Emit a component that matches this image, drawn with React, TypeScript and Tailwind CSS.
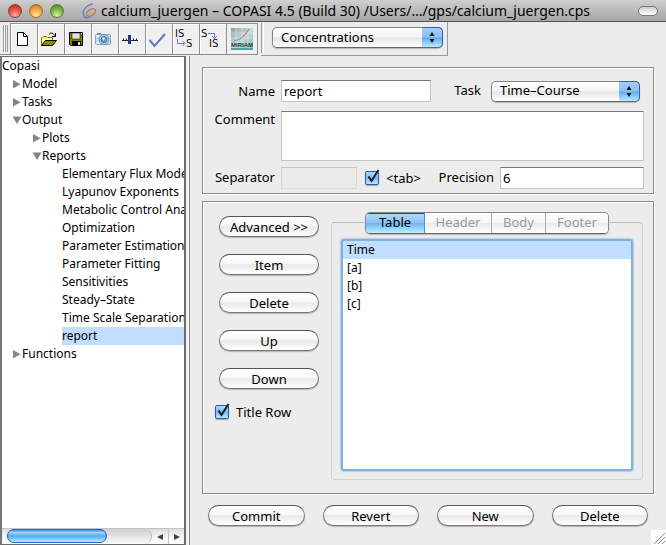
import React, { useId, useState } from "react";

type TreeNode = { label: string; depth: number; state?: "open" | "closed" };

const tree: TreeNode[] = [
  { label: "Copasi", depth: 0 },
  { label: "Model", depth: 1, state: "closed" },
  { label: "Tasks", depth: 1, state: "closed" },
  { label: "Output", depth: 1, state: "open" },
  { label: "Plots", depth: 2, state: "closed" },
  { label: "Reports", depth: 2, state: "open" },
  { label: "Elementary Flux Modes", depth: 3 },
  { label: "Lyapunov Exponents", depth: 3 },
  { label: "Metabolic Control Analysis", depth: 3 },
  { label: "Optimization", depth: 3 },
  { label: "Parameter Estimation", depth: 3 },
  { label: "Parameter Fitting", depth: 3 },
  { label: "Sensitivities", depth: 3 },
  { label: "Steady–State", depth: 3 },
  { label: "Time Scale Separation", depth: 3 },
  { label: "report", depth: 3 },
  { label: "Functions", depth: 1, state: "closed" },
];

const indents = ["pl-0", "pl-2.5", "pl-7.5", "pl-15"];

function Toggle({ state }: { state: "open" | "closed" }) {
  return (
    <svg width="10" height="10" viewBox="0 0 10 10" className="shrink-0" fill="#858585" aria-hidden="true">
      {state === "open" ? <path d="M0.500 1.500h9L5 9z" /> : <path d="M1 1v8.500L8.500 5.200z" />}
    </svg>
  );
}

function Tree() {
  return (
    <aside className="flex w-[186px] shrink-0 flex-col border-2 border-t border-b border-[#6b6b6b] border-l-[#777] bg-white">
      <ul className="min-h-0 flex-1 overflow-hidden">
        {tree.map((n) => (
          <li key={n.label} className={`flex h-[18px] items-center whitespace-nowrap ${indents[n.depth]}`}>
            {n.state && <Toggle state={n.state} />}
            <span className={`h-[18px] leading-[18px] ${n.state ? "" : "flex-1"} ${n.label === "report" ? "bg-[#c1deff]" : ""}`}>
              {n.label}
            </span>
          </li>
        ))}
      </ul>
      <div className="flex h-4 shrink-0 border-t border-[#c4c4c4] bg-linear-to-b from-[#dcdcdc] via-[#f4f4f4] to-white">
        <div className="ml-1 flex-1 rounded-full border-r border-[#b5b5b5] bg-linear-to-b from-[#cfcfcf] to-[#fbfbfb]">
          <div className="ml-px h-3.5 w-[100px] rounded-full border border-[#1f63c4] bg-[linear-gradient(#3b8be4,#a5d0fa_20%,#5aaaf3_50%,#79c4fb_70%,#b9f0ff)]" />
        </div>
        <button aria-label="Scroll left" className="flex w-4 items-center justify-center">
          <svg width="6" height="6" viewBox="0 0 6 6" fill="#444"><path d="M6 0v6L0 3z" /></svg>
        </button>
        <button aria-label="Scroll right" className="flex w-4 items-center justify-center border-l border-[#c4c4c4]">
          <svg width="6" height="6" viewBox="0 0 6 6" fill="#444"><path d="M0 0v6l6-3z" /></svg>
        </button>
      </div>
    </aside>
  );
}

function Popup({ label, value, id, className }: { label?: string; value: string; id: string; className: string }) {
  return (
    <div className={`relative h-[21px] ${className}`}>
      <select
        id={id}
        aria-label={label}
        className="block h-[21px] w-full appearance-none rounded-[5px] border border-[#858585] border-b-[#666] bg-[linear-gradient(#fff,#f3f3f3_48%,#e6e6e6_52%,#fff)] pb-0.5 pl-2 text-[13px] leading-4 shadow-[0_1px_1px_#bbb]"
      >
        <option>{value}</option>
      </select>
      <span className="pointer-events-none absolute inset-y-0 right-0 flex w-[21px] items-center justify-center rounded-r-[5px] border border-l-0 border-[#2a61b5] border-b-[#666] bg-[linear-gradient(#a9cdf3,#8bc0f3_48%,#5fa9ee_52%,#b5ecff)]">
        <svg width="6" height="13" viewBox="0 0 6 13" fill="#111"><path d="M3 1l2.500 4h-5zM3 12l2.500-4h-5z" /></svg>
      </span>
    </div>
  );
}

function Check({ label }: { label: string }) {
  const id = useId();
  const [on, setOn] = useState(true);
  return (
    <div className="flex items-center gap-[7px]">
      <span className="relative flex">
        <input
          id={id}
          type="checkbox"
          checked={on}
          onChange={() => setOn(!on)}
          className="size-3.5 appearance-none rounded-[2px] border border-[#2c5c9e] bg-[linear-gradient(#b8d6f6,#79b8f2_50%,#b4ebff)] shadow-[0_1px_1px_#aaa]"
        />
        {on && (
          <svg width="15" height="16" viewBox="0 0 15 16" className="pointer-events-none absolute bottom-0 left-0" fill="none" stroke="#1c1c2c">
            <path d="M3.500 7.500L6.500 12L13.500 1" strokeWidth="2" />
          </svg>
        )}
      </span>
      <label htmlFor={id} className="leading-[18px]">{label}</label>
    </div>
  );
}

function Pill({ children }: { children: React.ReactNode }) {
  return (
    <button className="h-[21px] w-full rounded-full border border-[#777] border-t-[#555] bg-[linear-gradient(#fff,#f7f7f7_45%,#e9e9e9_52%,#fff)] leading-[18px] shadow-[0_1px_1px_#b5b5b5]">
      {children}
    </button>
  );
}

const tools: { name: string; icon: React.ReactNode }[] = [
  {
    name: "New",
    icon: (
      <g fill="#fff" stroke="#000" strokeWidth="1">
        <path d="M5.500 3.500h6l4 4v9h-10z" />
        <path d="M11.500 3.500v4h4" fill="none" />
      </g>
    ),
  },
  {
    name: "Open",
    icon: (
      <g>
        <path d="M2.500 16.500v-8h1l1-1h3l1 1h5v3" fill="#ffff80" stroke="#77770a" />
        <path d="M2.500 16.500l4-5h11l-4 5z" fill="#8a8a00" stroke="#000" />
        <path d="M10 5.500c2-2 4-2 5.500 1M16.500 4v3.500h-3.500" fill="none" stroke="#000" />
      </g>
    ),
  },
  {
    name: "Save",
    icon: (
      <g>
        <path d="M3.500 3.500h13v13h-12l-1-1z" fill="#808000" stroke="#000" />
        <path d="M6 4h8v6H6z" fill="#e3e3e3" stroke="#000" strokeWidth="0.500" />
        <path d="M6 12h9v5H6z" fill="#000" />
        <path d="M12 13h2v3h-2z" fill="#ddd" />
        <path d="M15 4.500h1" stroke="#fff" />
      </g>
    ),
  },
  {
    name: "Capture",
    icon: (
      <g>
        <path d="M4 4.500h4" stroke="#6b87a8" />
        <rect x="2.500" y="5.500" width="15" height="10" rx="1" fill="#cbdbe9" stroke="#8ba5bd" />
        <path d="M3 7h4M3 14h4" stroke="#fff" />
        <circle cx="11" cy="10.500" r="5" fill="#b9d8ec" stroke="#6f8fae" />
        <circle cx="11" cy="10.500" r="3" fill="#5ba4d4" stroke="#3a6f9f" />
        <circle cx="10.500" cy="9.500" r="1.200" fill="#d4f4ff" />
      </g>
    ),
  },
  {
    name: "Slider",
    icon: (
      <g stroke="#222" fill="none">
        <path d="M2 11.500h16M3.500 9.500v2M6.500 9.500v2M13.500 9.500v2M16.500 9.500v2" />
        <path d="M9.500 6v9" stroke="#26358c" strokeWidth="3" />
      </g>
    ),
  },
  { name: "Check", icon: <path d="M2.500 11l5 6L18 5" fill="none" stroke="#6478c4" strokeWidth="2" /> },
  {
    name: "Initial state to state",
    icon: (
      <g fontFamily="'DejaVu Sans'" fontSize="10" fill="#111">
        <text x="1" y="8">IS</text>
        <text x="12" y="18">S</text>
        <path d="M3.500 10v4.500h7M8.500 12l2.500 2.500L8.500 17" fill="none" stroke="#6478c4" />
      </g>
    ),
  },
  {
    name: "State to initial state",
    icon: (
      <g fontFamily="'DejaVu Sans'" fontSize="10" fill="#111">
        <text x="0" y="8">S</text>
        <text x="8" y="18">IS</text>
        <path d="M7 4.500h6.500v5M11 7l2.500 2.500L16 7" fill="none" stroke="#6478c4" />
      </g>
    ),
  },
];

function Toolbar() {
  return (
    <div className="flex h-[34px] shrink-0 bg-[#ececec]">
      <div className="mt-px flex h-8 border-b border-[#8f8f8f] pl-[3px]">
        <span className="my-0.5 mr-px w-[3px] border-x border-[#999] bg-white" />
        <span className="my-0.5 mr-0.5 w-px bg-[#999]" />
        {tools.map((t) => (
          <button key={t.name} aria-label={t.name} className="flex w-[27px] items-center justify-center border-t border-l border-[#8f8f8f] bg-[#f0f0f0] pr-1 shadow-[inset_1px_1px_0_#fff]">
            <svg width="21" height="21" viewBox="0 0 21 21">{t.icon}</svg>
          </button>
        ))}
        <button aria-label="MIRIAM" className="flex w-[32px] items-center justify-center border border-b-0 border-[#8f8f8f] bg-[#f0f0f0]">
          <svg width="22" height="22" viewBox="0 0 22 22">
            <defs>
              <linearGradient id="miriam" x1="0" y1="0" x2="1" y2="1">
                <stop offset="0" stopColor="#8f9fa4" />
                <stop offset="0.500" stopColor="#c3dbd8" />
                <stop offset="1" stopColor="#8cb4b4" />
              </linearGradient>
            </defs>
            <rect width="22" height="22" fill="url(#miriam)" />
            <path d="M0 5h22M0 10h22M5 0v22M11 0v22M17 0v22" stroke="#e2efed" strokeWidth="0.500" />
            <path d="M3 13C10 12 14 8 18 1" fill="none" stroke="#b98ea4" strokeWidth="1.500" />
            <path d="M0 20h22v2H0z" fill="#5a9da3" />
            <text x="0" y="19" fontSize="6" fontWeight="bold" fontFamily="'Liberation Sans Narrow', 'Liberation Sans', sans-serif" fill="#17424c">
              MIRIAM
            </text>
          </svg>
        </button>
      </div>
      <div className="ml-[3px] h-[34px] border-r border-b border-[#999] pt-[5px] pr-1">
        <div className="flex">
          <span className="-mt-1 mr-2 h-[30px] w-[3px] border-x border-[#999] border-r-white" />
          <Popup id="quantity" label="Quantity" value="Concentrations" className="w-[171px]" />
        </div>
      </div>
    </div>
  );
}

function Group({ children, className }: { children: React.ReactNode; className: string }) {
  return (
    <section className={`border border-[#8c8c8c] shadow-[1px_1px_0_#fff,inset_1px_1px_0_#fff] ${className}`}>{children}</section>
  );
}

const field = "border border-[#c4c4c4] border-t-[#777] bg-white outline-none";

function Details() {
  return (
    <Group className="grid grid-cols-[72px_1fr] gap-x-1.5 pt-3 pr-[9px] pb-1">
      <label htmlFor="name" className="text-right leading-[22px]">Name</label>
      <div className="flex h-[22px] items-center">
        <input id="name" defaultValue="report" className={`h-[22px] w-[150px] px-0.5 ${field}`} />
        <label htmlFor="task" className="mr-2.5 ml-auto">Task</label>
        <Popup id="task" value="Time–Course" className="mr-1 w-[149px]" />
      </div>
      <label htmlFor="comment" className="mt-2 text-right leading-[18px]">Comment</label>
      <textarea id="comment" className={`mt-[9px] h-[50px] w-full resize-none ${field}`} />
      <label htmlFor="separator" className="mt-1.5 text-right leading-5">Separator</label>
      <div className="mt-1.5 flex h-[22px] items-center">
        <input id="separator" disabled className="mr-2 h-[22px] w-[76px] border border-[#dadada] border-t-[#c4c4c4] bg-[#ebebeb]" />
        <Check label="<tab>" />
        <label htmlFor="precision" className="mr-1.5 ml-auto">Precision</label>
        <input id="precision" defaultValue="6" className={`h-[22px] w-[144px] px-0.5 ${field}`} />
      </div>
    </Group>
  );
}

const idleTab = "h-5 border-l bg-[linear-gradient(#fff,#f5f5f5_48%,#ebebeb_52%,#fff)] text-[#999]";

function Editor() {
  return (
    <Group className="mt-[7px] flex min-h-0 flex-1 gap-3 pt-2.5 pr-2.5 pb-[13px] pl-3">
      <div className="flex w-[104px] shrink-0 flex-col pt-1">
        <div className="flex flex-col gap-[17px] pl-1">
          {["Advanced >>", "Item", "Delete", "Up", "Down"].map((b) => (
            <Pill key={b}>{b}</Pill>
          ))}
        </div>
        <div className="mt-3.5"><Check label="Title Row" /></div>
      </div>
      <div className="mt-2.5 flex min-w-0 flex-1 flex-col rounded-[4px] border border-[#d2d2d2] border-t-[#bcbcbc] px-[9px] pb-2">
        <div role="tablist" className="z-10 -mt-[11px] flex self-center overflow-hidden rounded-[5px] border border-[#888] border-b-[#666] shadow-[0_1px_1px_#bbb]">
          <button role="tab" aria-selected="true" className="h-5 w-[58px] bg-[linear-gradient(#b5d7f8,#8dc3f5_48%,#70b6f2_52%,#bdefff)] shadow-[inset_0_1px_0_#1c4ba0]">Table</button>
          <button role="tab" aria-selected="false" className={`w-[67px] border-[#4a90d8] ${idleTab}`}>Header</button>
          <button role="tab" aria-selected="false" className={`w-[54px] border-[#aaa] ${idleTab}`}>Body</button>
          <button role="tab" aria-selected="false" className={`w-[63px] border-[#aaa] ${idleTab}`}>Footer</button>
        </div>
        <ul className="mt-[5px] min-h-0 flex-1 rounded-[3px] border-2 border-[#80b2de] bg-white text-[12px] shadow-[0_0_1px_1px_#b5d1ec]">
          {["Time", "[a]", "[b]", "[c]"].map((r, i) => (
            <li key={r} className={`h-[18px] pl-1 leading-[18px] ${i === 0 ? "bg-[#c1deff]" : ""}`}>{r}</li>
          ))}
        </ul>
      </div>
    </Group>
  );
}

export default function App() {
  return (
    <div className="flex h-screen flex-col overflow-hidden bg-[#ececec] font-['Noto_Sans','Open_Sans',sans-serif] text-[12px] text-black">
      <header className="flex h-[22px] shrink-0 items-center border-b border-[#555] bg-linear-to-b from-[#cfcfcf] to-[#a6a6a6] pr-2 pl-2">
        <div className="flex gap-[7px]">
          <button aria-label="Close" className="size-3.5 rounded-full border border-[#8d3a36] bg-[radial-gradient(circle_at_50%_85%,#ffb0a5,#ec5a50_45%,#b3231e)]" />
          <button aria-label="Minimize" className="size-3.5 rounded-full border border-[#a0682a] bg-[radial-gradient(circle_at_50%_85%,#ffec9e,#f6b04a_45%,#c36f1c)]" />
          <button aria-label="Zoom" className="size-3.5 rounded-full border border-[#557c33] bg-[radial-gradient(circle_at_50%_85%,#d6f7a4,#85bd52_45%,#467b26)]" />
        </div>
        <svg width="15" height="16" viewBox="0 0 15 16" className="ml-[18px]" fill="none" strokeWidth="1.500" aria-hidden="true">
          <path d="M11 1C4 2 0 8 1.500 12s5 3 8 1" stroke="#6f7fd0" />
          <ellipse cx="9" cy="9.500" rx="5" ry="3" transform="rotate(-35 9 9.500)" stroke="#c7775b" />
        </svg>
        <h1 className="ml-1 flex-1 text-[14px] leading-5 whitespace-nowrap">calcium_juergen – COPASI 4.5 (Build 30) /Users/…/gps/calcium_juergen.cps</h1>
        <button aria-label="Toggle toolbar" className="h-2.5 w-5 shrink-0 rounded-full border border-[#777] bg-linear-to-b from-[#ccc] to-white" />
      </header>
      <Toolbar />
      <div className="flex min-h-0 flex-1">
        <Tree />
        <div className="w-1 shrink-0 border-r border-[#8c8c8c] bg-[#f4f4f4]" />
        <main className="flex min-w-0 flex-1 flex-col pt-[11px] pr-3 pl-3 text-[13px]">
          <Details />
          <Editor />
          <div className="mx-1.5 mt-[11px] mb-[19px] grid grid-cols-4 gap-[18px]">
            {["Commit", "Revert", "New", "Delete"].map((b) => (
              <Pill key={b}>{b}</Pill>
            ))}
          </div>
        </main>
      </div>
      <svg width="15" height="15" viewBox="0 0 15 15" className="absolute right-0 bottom-0" aria-hidden="true">
        <path d="M0 0h15v15H0z" fill="#fff" />
        <path d="M3 14L14 3M7 14l7-7M11 14l3-3" stroke="#888" />
      </svg>
    </div>
  );
}
